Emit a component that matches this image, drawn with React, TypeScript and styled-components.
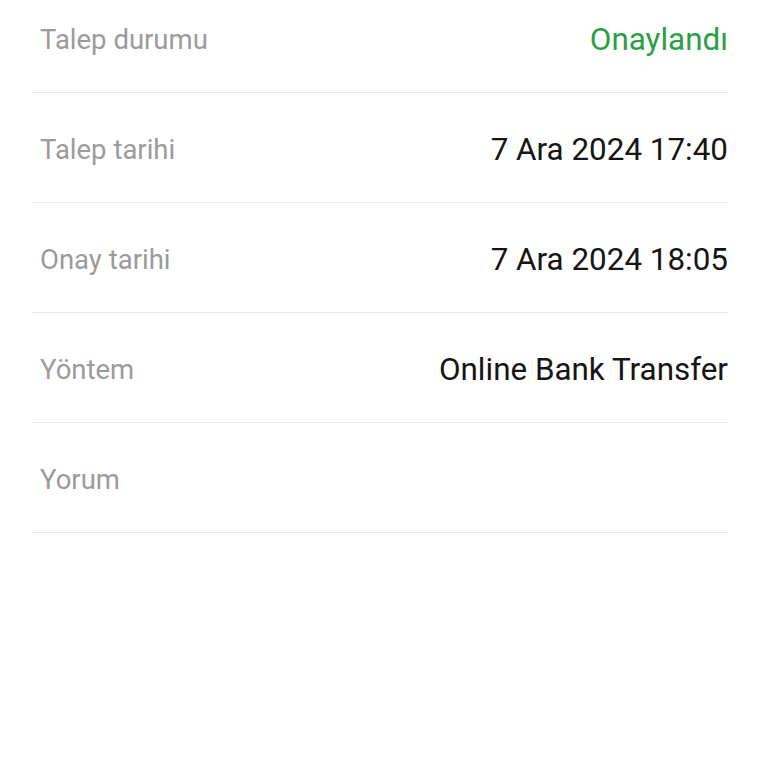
import React from "react";
import styled, { createGlobalStyle } from "styled-components";

const GlobalStyle = createGlobalStyle`
  html, body {
    margin: 0;
    padding: 0;
    background: #ffffff;
    font-family: Roboto, "Noto Sans", sans-serif;
  }
`;

const rows = [
  { label: "Talep durumu", value: "Onaylandı", tone: "success" },
  { label: "Talep tarihi", value: "7 Ara 2024 17:40" },
  { label: "Onay tarihi", value: "7 Ara 2024 18:05" },
  { label: "Yöntem", value: "Online Bank Transfer" },
  { label: "Yorum", value: "" },
];

const List = styled.div`
  margin: -17px 40px 0 32px;
  display: flex;
  flex-direction: column;
`;

const Row = styled.div`
  height: 110px;
  box-sizing: border-box;
  display: flex;
  align-items: center;
  justify-content: space-between;
  padding: 3px 0 0 8px;
  border-bottom: 1px solid #e8e8e8;
`;

const Label = styled.span`
  font-size: 27.5px;
  color: #9b9b9b;
`;

const Value = styled.span<{ $tone?: string }>`
  font-size: 31.4px;
  color: ${(p) => (p.$tone === "success" ? "#2c9e44" : "#151515")};
`;

export default function App() {
  return (
    <>
      <GlobalStyle />
      <List>
        {rows.map((r) => (
          <Row key={r.label}>
            <Label>{r.label}</Label>
            <Value $tone={r.tone}>{r.value}</Value>
          </Row>
        ))}
      </List>
    </>
  );
}
